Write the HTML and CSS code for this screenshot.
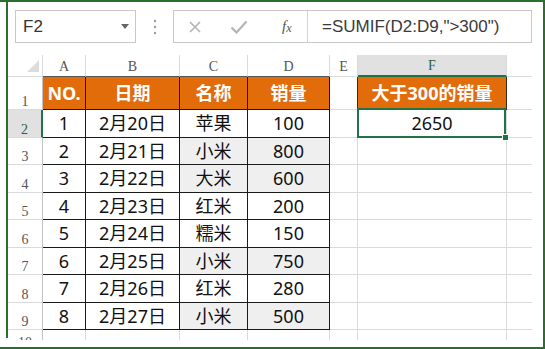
FILE: index.html
```html
<!DOCTYPE html>
<html lang="zh-CN">

<head>
    <meta charset="UTF-8">
    <meta name="viewport" content="width=device-width, initial-scale=1.0">
    <title>SUMIF</title>
    <link rel="stylesheet" href="styles.css">
</head>

<body>
    <div class="window">
        <div class="pane">
            <!-- 编辑栏 -->
            <div class="formula-bar">
                <div class="name-box"><span>F2</span><span class="caret"></span></div>
                <div class="grip">
                    <svg width="4" height="16" viewBox="0 0 4 16">
                        <circle cx="2" cy="2" r="1.2" fill="#9a9a9a" />
                        <circle cx="2" cy="8" r="1.2" fill="#9a9a9a" />
                        <circle cx="2" cy="14" r="1.2" fill="#9a9a9a" />
                    </svg>
                </div>
                <div class="fn-box">
                    <div class="fn-buttons">
                        <svg class="btn-x" width="14" height="12" viewBox="0 0 14 12">
                            <path d="M2 1 L12 11 M12 1 L2 11" stroke="#b4b4b4" stroke-width="1.6" fill="none" />
                        </svg>
                        <svg class="btn-ok" width="18" height="14" viewBox="0 0 18 14">
                            <path d="M1.5 7.5 L6.5 12.5 L16.5 1.5" stroke="#b4b4b4" stroke-width="2.2" fill="none" />
                        </svg>
                        <span class="fx"><i>f</i><i class="sub">x</i></span>
                    </div>
                    <div class="formula">=SUMIF(D2:D9,"&gt;300")</div>
                </div>
            </div>

            <!-- 工作表 -->
            <div class="sheet">
                <div class="cell ch corner">
                    <svg width="12" height="12" viewBox="0 0 12 12"><polygon points="12,0 12,12 0,12" fill="#dcdcdc" /></svg>
                </div>
                <div class="cell ch top">A</div>
                <div class="cell ch top">B</div>
                <div class="cell ch top">C</div>
                <div class="cell ch top">D</div>
                <div class="cell ch">E</div>
                <div class="cell ch on">F</div>
                <div class="cell ch last"></div>

                <div class="cell rh">1</div>
                <div class="cell t hd">NO.</div>
                <div class="cell t hd">日期</div>
                <div class="cell t hd">名称</div>
                <div class="cell t hd">销量</div>
                <div class="cell edge"></div>
                <div class="cell hd f1">大于300的销量</div>
                <div class="cell last"></div>

                <div class="cell rh on">2</div>
                <div class="cell t">1</div>
                <div class="cell t">2月20日</div>
                <div class="cell t">苹果</div>
                <div class="cell t">100</div>
                <div class="cell"></div>
                <div class="cell sel">2650<span class="handle"></span></div>
                <div class="cell last"></div>

                <div class="cell rh">3</div>
                <div class="cell t">2</div>
                <div class="cell t">2月21日</div>
                <div class="cell t g">小米</div>
                <div class="cell t g">800</div>
                <div class="cell"></div>
                <div class="cell"></div>
                <div class="cell last"></div>

                <div class="cell rh">4</div>
                <div class="cell t">3</div>
                <div class="cell t">2月22日</div>
                <div class="cell t g">大米</div>
                <div class="cell t g">600</div>
                <div class="cell"></div>
                <div class="cell"></div>
                <div class="cell last"></div>

                <div class="cell rh">5</div>
                <div class="cell t">4</div>
                <div class="cell t">2月23日</div>
                <div class="cell t">红米</div>
                <div class="cell t">200</div>
                <div class="cell"></div>
                <div class="cell"></div>
                <div class="cell last"></div>

                <div class="cell rh">6</div>
                <div class="cell t">5</div>
                <div class="cell t">2月24日</div>
                <div class="cell t">糯米</div>
                <div class="cell t">150</div>
                <div class="cell"></div>
                <div class="cell"></div>
                <div class="cell last"></div>

                <div class="cell rh">7</div>
                <div class="cell t">6</div>
                <div class="cell t">2月25日</div>
                <div class="cell t g">小米</div>
                <div class="cell t g">750</div>
                <div class="cell"></div>
                <div class="cell"></div>
                <div class="cell last"></div>

                <div class="cell rh">8</div>
                <div class="cell t">7</div>
                <div class="cell t">2月26日</div>
                <div class="cell t">红米</div>
                <div class="cell t">280</div>
                <div class="cell"></div>
                <div class="cell"></div>
                <div class="cell last"></div>

                <div class="cell rh">9</div>
                <div class="cell t">8</div>
                <div class="cell t">2月27日</div>
                <div class="cell t g">小米</div>
                <div class="cell t g">500</div>
                <div class="cell"></div>
                <div class="cell"></div>
                <div class="cell last"></div>

                <div class="cell rh r10">10</div>
                <div class="cell r10"></div>
                <div class="cell r10"></div>
                <div class="cell r10"></div>
                <div class="cell r10"></div>
                <div class="cell r10"></div>
                <div class="cell r10"></div>
                <div class="cell r10 last"></div>
            </div>
        </div>
    </div>
</body>

</html>
```

FILE: styles.css
```css
/* Excel 截图 */
body {
    margin: 0;
    background-color: #fff;
    font-family: "Noto Sans", "Noto Sans CJK SC", sans-serif;
}

.window {
    width: 545px;
    height: 349px;
    box-sizing: border-box;
    border: 2px solid #2b6e2e;
    border-left: none;
}

.pane {
    margin-left: 6px;
    height: 336px;
    box-sizing: border-box;
    border-left: 2px solid #2b6e2e;
    padding-top: 8px;
}

/* 编辑栏 */
.formula-bar {
    display: flex;
    height: 33px;
    margin-left: 7px;
    font-family: "Liberation Sans", sans-serif;
}

.name-box {
    width: 121px;
    box-sizing: border-box;
    border: 1px solid #c8c8c8;
    display: flex;
    align-items: center;
    justify-content: space-between;
    padding: 0 6px 0 7px;
    font-size: 17px;
    color: #333;
}

.caret {
    width: 0;
    height: 0;
    border-top: 5px solid #666;
    border-left: 4px solid transparent;
    border-right: 4px solid transparent;
}

.grip {
    width: 37px;
    display: flex;
    align-items: center;
    justify-content: center;
}

.fn-box {
    width: 359px;
    box-sizing: border-box;
    border: 1px solid #c8c8c8;
    display: flex;
}

.fn-buttons {
    width: 134px;
    box-sizing: border-box;
    border-right: 1px solid #d4d4d4;
    display: flex;
    align-items: center;
    padding-left: 14px;
}

.btn-ok {
    margin-left: 28px;
}

.fx {
    margin-left: 34px;
    font-family: "Liberation Serif", serif;
    font-size: 15px;
    color: #555;
}

.fx .sub {
    font-size: 12px;
    position: relative;
    top: 1px;
}

.formula {
    display: flex;
    align-items: center;
    padding-left: 14px;
    font-size: 17px;
    color: #3a3a3a;
}

/* 工作表 */
.sheet {
    margin-top: 12px;
    display: grid;
    grid-template-columns: 35px 43px 94px 68px 82px 28px 149px 25px;
    grid-template-rows: 22px 33px repeat(8, 27.5px) 10px;
}

.cell {
    box-sizing: border-box;
    border-right: 1px solid #dadada;
    border-bottom: 1px solid #dadada;
    display: flex;
    align-items: center;
    justify-content: center;
    font-size: 18px;
    color: #111;
    line-height: 1;
    white-space: nowrap;
}

.cell.last {
    border-right: none;
}

.ch {
    font-family: "Liberation Serif", serif;
    font-size: 14px;
    color: #555;
    padding-top: 2px;
}

.ch.top {
    border-bottom-color: #555;
}

.ch.corner {
    justify-content: flex-end;
    align-items: flex-end;
    padding: 0 3px 4px 0;
}

.rh {
    font-family: "Liberation Serif", serif;
    font-size: 14px;
    color: #555;
    align-items: flex-end;
    line-height: 14px;
    border-right-color: #c4c4c4;
}

.ch.on {
    background-color: #e1e1e1;
    color: #2f5d3e;
    border-bottom: 2px solid #217346;
}

.rh.on {
    background-color: #e1e1e1;
    color: #2f5d3e;
    border-right: 2px solid #217346;
}

.t {
    border-right-color: #1a1a1a;
    border-bottom-color: #1a1a1a;
}

.hd {
    background-color: #e36c0a;
    color: #fff;
    font-weight: bold;
}

.f1 {
    border-right-color: #3a2a1a;
    border-bottom-color: #3a2a1a;
}

.edge {
    border-right-color: #3a2a1a;
}

.g {
    background-color: #efefef;
}

/* 选中的单元格 */
.sel {
    position: relative;
    z-index: 1;
}

.sel::after {
    content: "";
    position: absolute;
    top: -2px;
    left: -1px;
    right: 0;
    bottom: -1px;
    border: 2px solid #217346;
}

.handle {
    position: absolute;
    right: -3px;
    bottom: -4px;
    width: 5px;
    height: 5px;
    background-color: #217346;
    border: 1px solid #fff;
    z-index: 2;
}

.r10 {
    overflow: hidden;
    border-bottom: none;
}

.rh.r10 {
    align-items: flex-start;
    padding-top: 6px;
}
```
